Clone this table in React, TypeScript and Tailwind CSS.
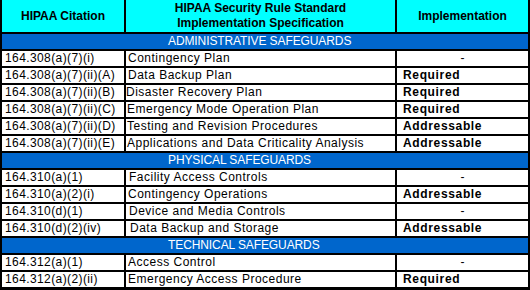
type Row =
  | { kind: 'section'; label: string }
  | { kind: 'data'; cite: string; spec: string; impl: string; pad?: string };

const rows: Row[] = [
  { kind: 'section', label: 'ADMINISTRATIVE SAFEGUARDS' },
  { kind: 'data', cite: '164.308(a)(7)(i)', spec: 'Contingency Plan', impl: '-', pad: 'pl-[2px]' },
  { kind: 'data', cite: '164.308(a)(7)(ii)(A)', spec: 'Data Backup Plan', impl: 'Required', pad: 'pl-[2px]' },
  { kind: 'data', cite: '164.308(a)(7)(ii)(B)', spec: 'Disaster Recovery Plan', impl: 'Required', pad: 'pl-0' },
  { kind: 'data', cite: '164.308(a)(7)(ii)(C)', spec: 'Emergency Mode Operation Plan', impl: 'Required', pad: 'pl-[1px]' },
  { kind: 'data', cite: '164.308(a)(7)(ii)(D)', spec: 'Testing and Revision Procedures', impl: 'Addressable', pad: 'pl-[1px]' },
  { kind: 'data', cite: '164.308(a)(7)(ii)(E)', spec: 'Applications and Data Criticality Analysis', impl: 'Addressable', pad: 'pl-[1px]' },
  { kind: 'section', label: 'PHYSICAL SAFEGUARDS' },
  { kind: 'data', cite: '164.310(a)(1)', spec: 'Facility Access Controls', impl: '-', pad: 'pl-[3px]' },
  { kind: 'data', cite: '164.310(a)(2)(i)', spec: 'Contingency Operations', impl: 'Addressable', pad: 'pl-[2px]' },
  { kind: 'data', cite: '164.310(d)(1)', spec: 'Device and Media Controls', impl: '-', pad: 'pl-[3px]' },
  { kind: 'data', cite: '164.310(d)(2)(iv)', spec: 'Data Backup and Storage', impl: 'Addressable', pad: 'pl-[4px]' },
  { kind: 'section', label: 'TECHNICAL SAFEGUARDS' },
  { kind: 'data', cite: '164.312(a)(1)', spec: 'Access Control', impl: '-', pad: 'pl-[2px]' },
  { kind: 'data', cite: '164.312(a)(2)(ii)', spec: 'Emergency Access Procedure', impl: 'Required', pad: 'pl-[2px]' },
];

export default function App() {
  return (
    <div className="w-[530px] h-[290px] bg-black font-['Liberation_Sans',Arial,sans-serif] text-black">
      <div className="grid grid-cols-[122px_269px_131px] grid-rows-[32px] auto-rows-[15px] gap-[2px] px-[2px] pb-[3px]">
        <div className="bg-[#00ffff] flex items-center justify-center text-[12px] font-bold leading-[15px]">
          HIPAA Citation
        </div>
        <div className="bg-[#00ffff] flex flex-col items-center justify-center text-[12px] font-bold leading-[15px] text-center">
          <span>HIPAA Security Rule Standard</span>
          <span>Implementation Specification</span>
        </div>
        <div className="bg-[#00ffff] flex items-center justify-center text-[12px] font-bold leading-[15px]">
          Implementation
        </div>
        {rows.map((r, i) =>
          r.kind === 'section' ? (
            <div
              key={i}
              className="col-span-3 bg-[#0066cc] text-white text-[12px] leading-[15px] pl-[166px] flex items-center tracking-[-0.1px]"
            >
              {r.label}
            </div>
          ) : (
            <Data key={i} row={r} />
          )
        )}
      </div>
    </div>
  );
}

function Data({ row }: { row: { cite: string; spec: string; impl: string; pad?: string } }) {
  return (
    <>
      <div className="bg-white flex items-center pl-[3px] text-[12px] leading-[15px] tracking-[0.4px] whitespace-nowrap overflow-hidden">
        {row.cite}
      </div>
      <div className={`bg-white flex items-center text-[12px] leading-[15px] tracking-[0.5px] whitespace-nowrap overflow-hidden ${row.pad}`}>
        {row.spec}
      </div>
      {row.impl === '-' ? (
        <div className="bg-white flex items-center justify-center text-[12px] leading-[15px]">-</div>
      ) : (
        <div className="bg-white flex items-center pl-[6px] text-[12px] font-bold leading-[15px] tracking-[0.65px]">
          {row.impl}
        </div>
      )}
    </>
  );
}
